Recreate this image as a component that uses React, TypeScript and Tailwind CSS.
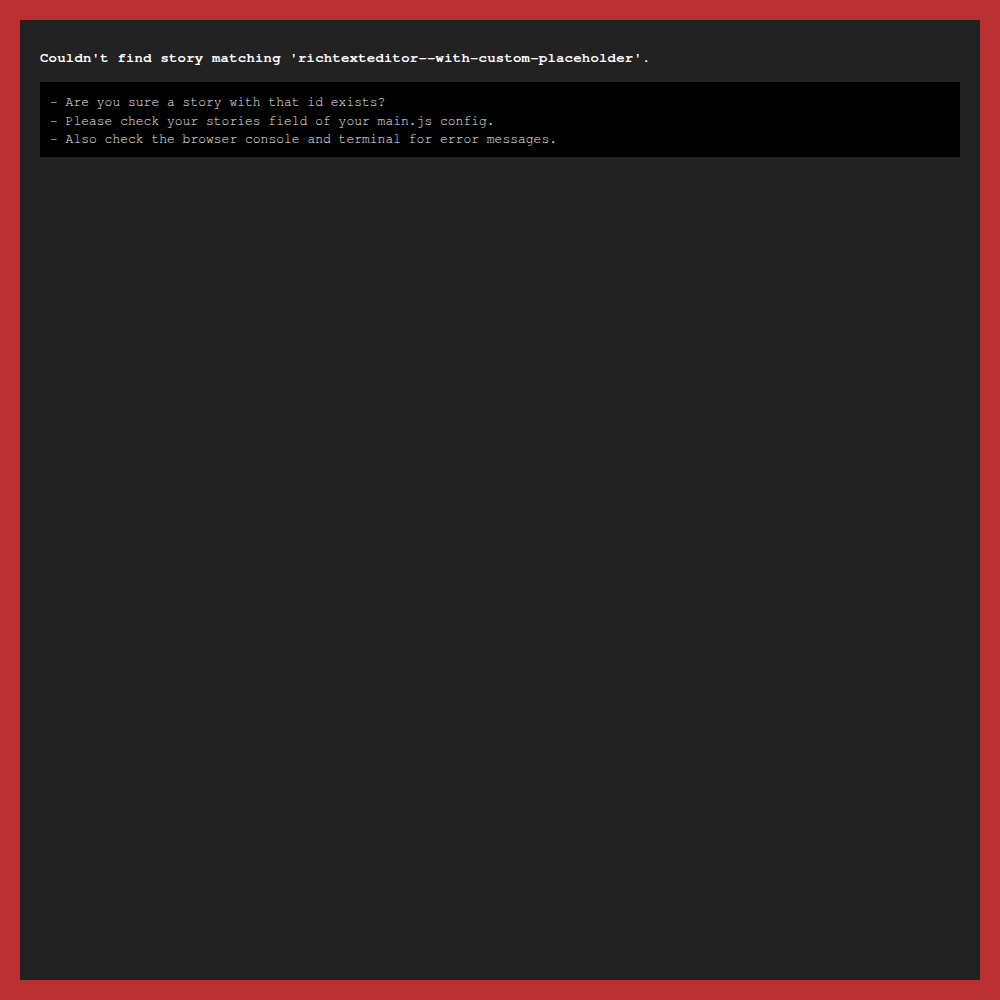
export default function App() {
  const hints = [
    '- Are you sure a story with that id exists?',
    '- Please check your stories field of your main.js config.',
    '- Also check the browser console and terminal for error messages.',
  ];

  return (
    <div className="h-[1000px] w-[1000px] border-[20px] border-[#bb3131] bg-[#222222] p-5 text-white font-['Nimbus_Mono_PS','FreeMono','Courier_New','Liberation_Mono',monospace]">
      {/* HEADING */}
      <h1 className="mt-[10px] text-[14px] leading-[16px] font-bold tracking-[0.2px] pr-[25px]">
        Couldn't find story matching 'richtexteditor--with-custom-placeholder'.
      </h1>

      {/* CODE BLOCK */}
      <pre className="mt-4 bg-black px-[10px] pt-3 pb-[7px] text-[13px] leading-[18.5px] text-[#eeeeee] font-['Nimbus_Mono_PS','FreeMono','Courier_New','Liberation_Mono',monospace]">
        {hints.join('\n')}
      </pre>
    </div>
  );
}
